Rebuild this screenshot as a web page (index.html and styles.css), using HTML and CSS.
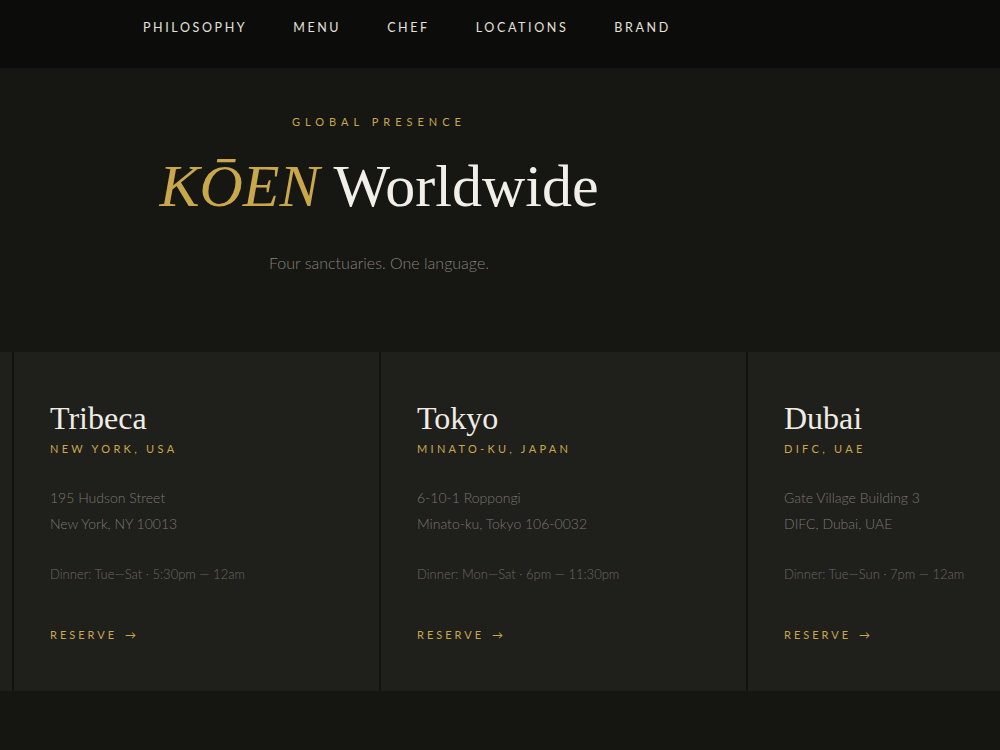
FILE: index.html
```html
<!DOCTYPE html>
<html lang="en">
<head>
    <meta charset="UTF-8">
    <meta name="viewport" content="width=device-width, initial-scale=1.0">
    <title>KŌEN Worldwide</title>
    <link rel="stylesheet" href="styles.css">
</head>
<body>
    <!-- Navegação principal -->
    <nav class="topnav">
        <a href="#">Philosophy</a>
        <a href="#">Menu</a>
        <a href="#">Chef</a>
        <a href="#">Locations</a>
        <a href="#">Brand</a>
    </nav>

    <!-- Cabeçalho da seção -->
    <section class="hero">
        <div class="hero-inner">
            <p class="eyebrow">Global Presence</p>
            <h1><em>KŌEN</em> Worldwide</h1>
            <p class="lead">Four sanctuaries. One language.</p>
        </div>
    </section>

    <!-- Faixa de restaurantes -->
    <section class="locations">
        <div class="location-track">
            <div class="location-card">
                <h2>Mayfair</h2>
                <p class="region">London, UK</p>
                <p class="address">34 Grosvenor Square<br>London W1K 2HD</p>
                <p class="hours">Dinner: Tue—Sat · 6pm — 12am</p>
                <a class="reserve" href="#">Reserve <span>→</span></a>
            </div>
            <div class="location-card">
                <h2>Tribeca</h2>
                <p class="region">New York, USA</p>
                <p class="address">195 Hudson Street<br>New York, NY 10013</p>
                <p class="hours">Dinner: Tue—Sat · 5:30pm — 12am</p>
                <a class="reserve" href="#">Reserve <span>→</span></a>
            </div>
            <div class="location-card">
                <h2>Tokyo</h2>
                <p class="region">Minato-ku, Japan</p>
                <p class="address">6-10-1 Roppongi<br>Minato-ku, Tokyo 106-0032</p>
                <p class="hours">Dinner: Mon—Sat · 6pm — 11:30pm</p>
                <a class="reserve" href="#">Reserve <span>→</span></a>
            </div>
            <div class="location-card">
                <h2>Dubai</h2>
                <p class="region">DIFC, UAE</p>
                <p class="address">Gate Village Building 3<br>DIFC, Dubai, UAE</p>
                <p class="hours">Dinner: Tue—Sun · 7pm — 12am</p>
                <a class="reserve" href="#">Reserve <span>→</span></a>
            </div>
        </div>
    </section>
</body>
</html>
```

FILE: styles.css
```css
* {
    margin: 0;
    padding: 0;
    box-sizing: border-box;
}

body {
    background-color: #151511;
    font-family: Lato, "Noto Sans", sans-serif;
    overflow: hidden;
}

a {
    text-decoration: none;
}

/* Navegação */
.topnav {
    height: 68px;
    background: #0c0c0b;
    display: flex;
    align-items: center;
    gap: 46px;
    padding-left: 143px;
    padding-bottom: 14px;
}

.topnav a {
    color: #e4e1da;
    font-size: 12.5px;
    letter-spacing: 2.6px;
    text-transform: uppercase;
}

/* Cabeçalho */
.hero {
    height: 284px;
    background: #161612;
}

.hero-inner {
    width: 758px;
    text-align: center;
    padding-top: 47px;
}

.eyebrow {
    color: #c9a84c;
    font-size: 11px;
    letter-spacing: 5px;
    text-transform: uppercase;
}

.hero h1 {
    font-family: "Liberation Serif", "DejaVu Serif", serif;
    font-weight: 400;
    font-size: 60px;
    line-height: 1;
    color: #f2efe8;
    margin-top: 28px;
}

.hero h1 em {
    color: #c9a84c;
}

.lead {
    color: #85827a;
    font-size: 16px;
    font-weight: 300;
    margin-top: 37px;
}

/* Cartões dos restaurantes */
.locations {
    overflow: hidden;
}

.location-track {
    display: flex;
    gap: 2px;
    margin-left: -353px;
    width: max-content;
    background: #121210;
}

.location-card {
    width: 365px;
    height: 339px;
    background: #1f1f1c;
    padding: 47px 36px 0;
}

.location-card h2 {
    font-family: "Liberation Serif", "DejaVu Serif", serif;
    font-weight: 400;
    font-size: 32px;
    line-height: 38px;
    color: #efece4;
}

.region {
    color: #c9a84c;
    font-size: 11px;
    letter-spacing: 3.3px;
    text-transform: uppercase;
    margin-top: 5px;
}

.address {
    color: #7a776f;
    font-size: 14px;
    font-weight: 300;
    line-height: 26px;
    margin-top: 30px;
}

.hours {
    color: #6b6861;
    font-size: 13px;
    font-weight: 300;
    margin-top: 29px;
}

.reserve {
    display: inline-block;
    color: #c9a84c;
    font-size: 11px;
    letter-spacing: 3px;
    text-transform: uppercase;
    margin-top: 46px;
}

.reserve span {
    margin-left: 2px;
    letter-spacing: 0;
}
```
